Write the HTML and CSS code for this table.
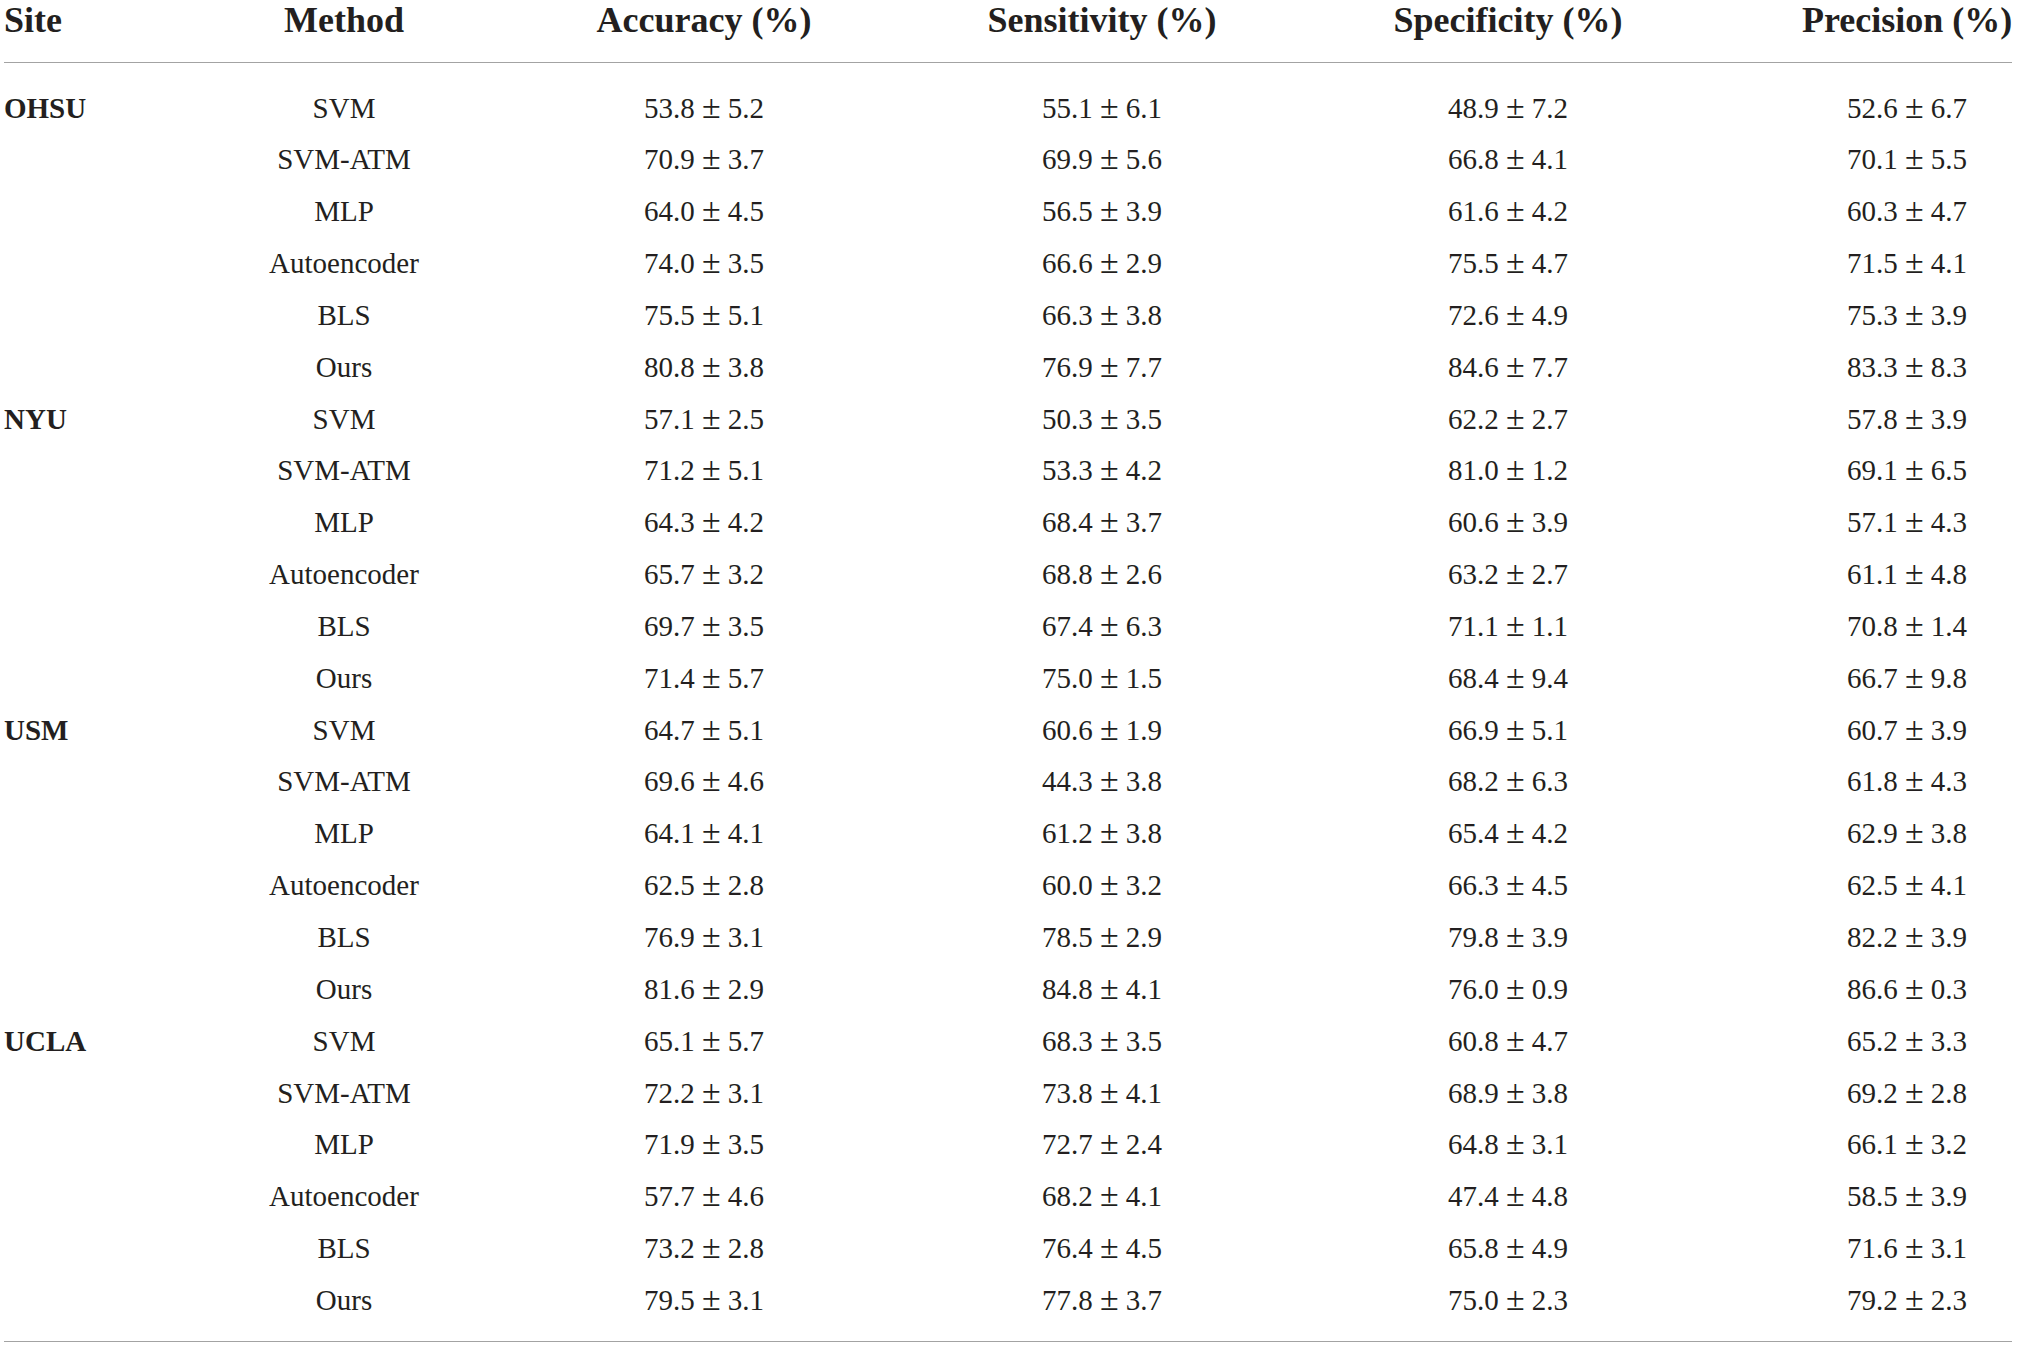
FILE: index.html
```html
<!DOCTYPE html>
<html>
<head>
  <meta charset="UTF-8">
  <title>Classification results</title>
  <link rel="stylesheet" href="styles.css">
</head>
<body>
  <table class="results">
    <colgroup>
      <col class="col-site">
      <col class="col-method">
      <col class="col-acc">
      <col class="col-sen">
      <col class="col-spe">
      <col class="col-pre">
    </colgroup>
    <thead>
      <tr>
        <th class="site">Site</th>
        <th>Method</th>
        <th>Accuracy (%)</th>
        <th>Sensitivity (%)</th>
        <th>Specificity (%)</th>
        <th class="last">Precision (%)</th>
      </tr>
    </thead>
    <tbody>
      <tr><td class="site">OHSU</td><td>SVM</td><td>53.8 <span class="pm">±</span> 5.2</td><td>55.1 <span class="pm">±</span> 6.1</td><td>48.9 <span class="pm">±</span> 7.2</td><td class="last">52.6 <span class="pm">±</span> 6.7</td></tr>
      <tr><td class="site"></td><td>SVM-ATM</td><td>70.9 <span class="pm">±</span> 3.7</td><td>69.9 <span class="pm">±</span> 5.6</td><td>66.8 <span class="pm">±</span> 4.1</td><td class="last">70.1 <span class="pm">±</span> 5.5</td></tr>
      <tr><td class="site"></td><td>MLP</td><td>64.0 <span class="pm">±</span> 4.5</td><td>56.5 <span class="pm">±</span> 3.9</td><td>61.6 <span class="pm">±</span> 4.2</td><td class="last">60.3 <span class="pm">±</span> 4.7</td></tr>
      <tr><td class="site"></td><td>Autoencoder</td><td>74.0 <span class="pm">±</span> 3.5</td><td>66.6 <span class="pm">±</span> 2.9</td><td>75.5 <span class="pm">±</span> 4.7</td><td class="last">71.5 <span class="pm">±</span> 4.1</td></tr>
      <tr><td class="site"></td><td>BLS</td><td>75.5 <span class="pm">±</span> 5.1</td><td>66.3 <span class="pm">±</span> 3.8</td><td>72.6 <span class="pm">±</span> 4.9</td><td class="last">75.3 <span class="pm">±</span> 3.9</td></tr>
      <tr><td class="site"></td><td>Ours</td><td>80.8 <span class="pm">±</span> 3.8</td><td>76.9 <span class="pm">±</span> 7.7</td><td>84.6 <span class="pm">±</span> 7.7</td><td class="last">83.3 <span class="pm">±</span> 8.3</td></tr>
      <tr><td class="site">NYU</td><td>SVM</td><td>57.1 <span class="pm">±</span> 2.5</td><td>50.3 <span class="pm">±</span> 3.5</td><td>62.2 <span class="pm">±</span> 2.7</td><td class="last">57.8 <span class="pm">±</span> 3.9</td></tr>
      <tr><td class="site"></td><td>SVM-ATM</td><td>71.2 <span class="pm">±</span> 5.1</td><td>53.3 <span class="pm">±</span> 4.2</td><td>81.0 <span class="pm">±</span> 1.2</td><td class="last">69.1 <span class="pm">±</span> 6.5</td></tr>
      <tr><td class="site"></td><td>MLP</td><td>64.3 <span class="pm">±</span> 4.2</td><td>68.4 <span class="pm">±</span> 3.7</td><td>60.6 <span class="pm">±</span> 3.9</td><td class="last">57.1 <span class="pm">±</span> 4.3</td></tr>
      <tr><td class="site"></td><td>Autoencoder</td><td>65.7 <span class="pm">±</span> 3.2</td><td>68.8 <span class="pm">±</span> 2.6</td><td>63.2 <span class="pm">±</span> 2.7</td><td class="last">61.1 <span class="pm">±</span> 4.8</td></tr>
      <tr><td class="site"></td><td>BLS</td><td>69.7 <span class="pm">±</span> 3.5</td><td>67.4 <span class="pm">±</span> 6.3</td><td>71.1 <span class="pm">±</span> 1.1</td><td class="last">70.8 <span class="pm">±</span> 1.4</td></tr>
      <tr><td class="site"></td><td>Ours</td><td>71.4 <span class="pm">±</span> 5.7</td><td>75.0 <span class="pm">±</span> 1.5</td><td>68.4 <span class="pm">±</span> 9.4</td><td class="last">66.7 <span class="pm">±</span> 9.8</td></tr>
      <tr><td class="site">USM</td><td>SVM</td><td>64.7 <span class="pm">±</span> 5.1</td><td>60.6 <span class="pm">±</span> 1.9</td><td>66.9 <span class="pm">±</span> 5.1</td><td class="last">60.7 <span class="pm">±</span> 3.9</td></tr>
      <tr><td class="site"></td><td>SVM-ATM</td><td>69.6 <span class="pm">±</span> 4.6</td><td>44.3 <span class="pm">±</span> 3.8</td><td>68.2 <span class="pm">±</span> 6.3</td><td class="last">61.8 <span class="pm">±</span> 4.3</td></tr>
      <tr><td class="site"></td><td>MLP</td><td>64.1 <span class="pm">±</span> 4.1</td><td>61.2 <span class="pm">±</span> 3.8</td><td>65.4 <span class="pm">±</span> 4.2</td><td class="last">62.9 <span class="pm">±</span> 3.8</td></tr>
      <tr><td class="site"></td><td>Autoencoder</td><td>62.5 <span class="pm">±</span> 2.8</td><td>60.0 <span class="pm">±</span> 3.2</td><td>66.3 <span class="pm">±</span> 4.5</td><td class="last">62.5 <span class="pm">±</span> 4.1</td></tr>
      <tr><td class="site"></td><td>BLS</td><td>76.9 <span class="pm">±</span> 3.1</td><td>78.5 <span class="pm">±</span> 2.9</td><td>79.8 <span class="pm">±</span> 3.9</td><td class="last">82.2 <span class="pm">±</span> 3.9</td></tr>
      <tr><td class="site"></td><td>Ours</td><td>81.6 <span class="pm">±</span> 2.9</td><td>84.8 <span class="pm">±</span> 4.1</td><td>76.0 <span class="pm">±</span> 0.9</td><td class="last">86.6 <span class="pm">±</span> 0.3</td></tr>
      <tr><td class="site">UCLA</td><td>SVM</td><td>65.1 <span class="pm">±</span> 5.7</td><td>68.3 <span class="pm">±</span> 3.5</td><td>60.8 <span class="pm">±</span> 4.7</td><td class="last">65.2 <span class="pm">±</span> 3.3</td></tr>
      <tr><td class="site"></td><td>SVM-ATM</td><td>72.2 <span class="pm">±</span> 3.1</td><td>73.8 <span class="pm">±</span> 4.1</td><td>68.9 <span class="pm">±</span> 3.8</td><td class="last">69.2 <span class="pm">±</span> 2.8</td></tr>
      <tr><td class="site"></td><td>MLP</td><td>71.9 <span class="pm">±</span> 3.5</td><td>72.7 <span class="pm">±</span> 2.4</td><td>64.8 <span class="pm">±</span> 3.1</td><td class="last">66.1 <span class="pm">±</span> 3.2</td></tr>
      <tr><td class="site"></td><td>Autoencoder</td><td>57.7 <span class="pm">±</span> 4.6</td><td>68.2 <span class="pm">±</span> 4.1</td><td>47.4 <span class="pm">±</span> 4.8</td><td class="last">58.5 <span class="pm">±</span> 3.9</td></tr>
      <tr><td class="site"></td><td>BLS</td><td>73.2 <span class="pm">±</span> 2.8</td><td>76.4 <span class="pm">±</span> 4.5</td><td>65.8 <span class="pm">±</span> 4.9</td><td class="last">71.6 <span class="pm">±</span> 3.1</td></tr>
      <tr><td class="site"></td><td>Ours</td><td>79.5 <span class="pm">±</span> 3.1</td><td>77.8 <span class="pm">±</span> 3.7</td><td>75.0 <span class="pm">±</span> 2.3</td><td class="last">79.2 <span class="pm">±</span> 2.3</td></tr>
    </tbody>
  </table>
</body>
</html>
```

FILE: styles.css
```css
body {
  margin: 0;
  background-color: #fff;
  color: #231f20;
  font-family: 'Liberation Serif', 'Times New Roman', serif;
}
.results {
  margin-left: 4px;
  width: 2008px;
  table-layout: fixed;
  border-collapse: collapse;
}
.col-site {
  width: 186px;
}
.col-method {
  width: 308px;
}
.col-acc {
  width: 412px;
}
.col-sen {
  width: 384px;
}
.col-spe {
  width: 428px;
}
.col-pre {
  width: 290px;
}
.results th,
.results td {
  padding: 0;
  text-align: center;
  white-space: nowrap;
}
.results th {
  font-size: 36px;
  font-weight: bold;
  line-height: 40px;
  padding-bottom: 22px;
  border-bottom: 1.5px solid #a3a3a3;
}
.results td {
  font-size: 29px;
  line-height: 51.85px;
}
.results .pm {
  font-size: 34px;
  line-height: 1;
}
.results .site {
  text-align: left;
  font-weight: bold;
}
.results .last {
  padding-left: 80px;
}
.results tbody tr:first-child td {
  padding-top: 19.5px;
}
.results tbody tr:last-child td {
  padding-bottom: 14px;
  border-bottom: 1.5px solid #a3a3a3;
}
```
